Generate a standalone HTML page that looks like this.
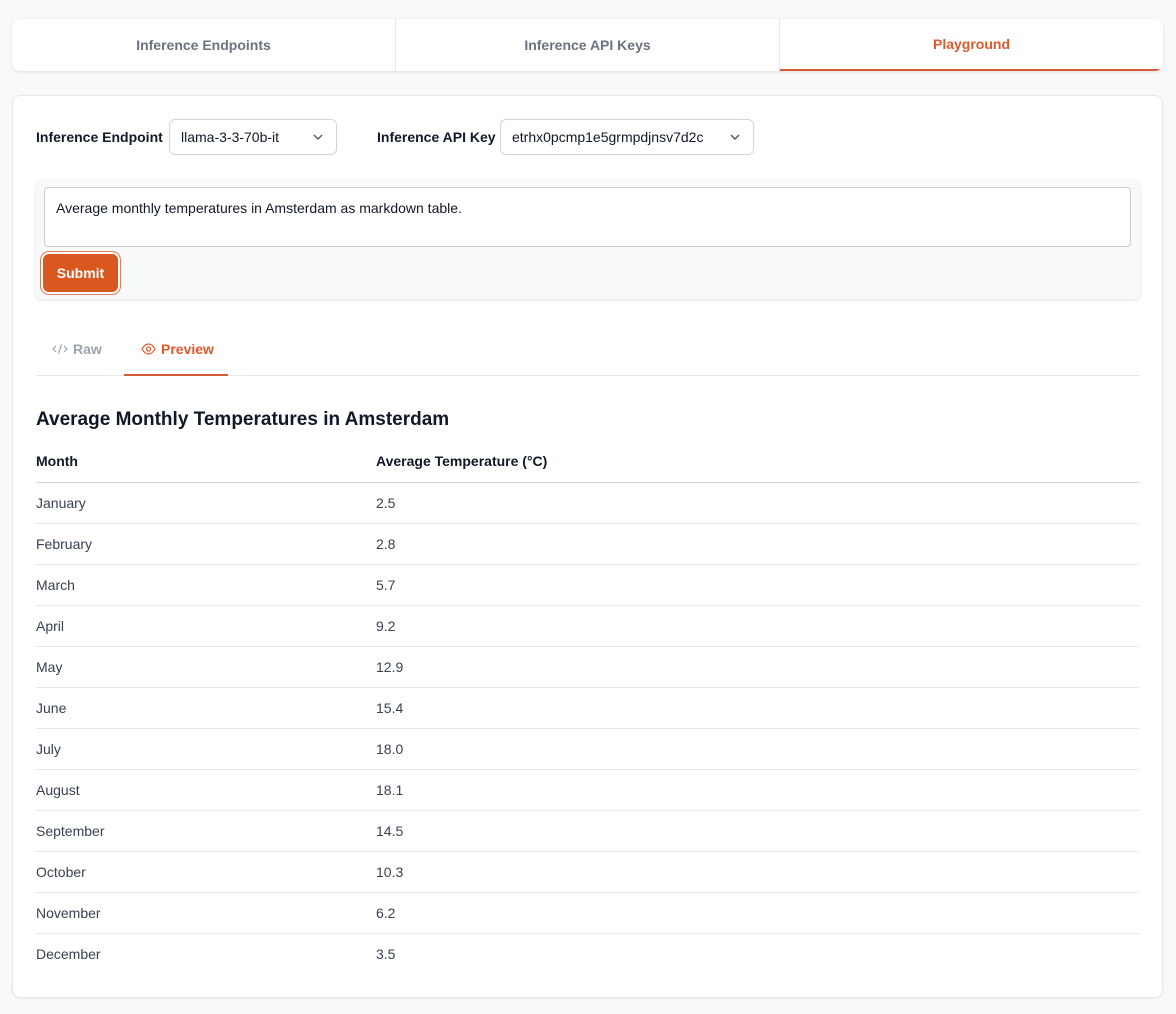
<!DOCTYPE html>
<html><head><meta charset="utf-8"><style>
*{box-sizing:border-box;margin:0;padding:0}
body{width:1176px;height:1014px;background:#f8f9fa;font-family:"Liberation Sans",Arial,sans-serif;position:relative;overflow:hidden;color:#111827}
.tabs{position:absolute;left:12px;top:19px;width:1151px;height:52px;background:#fff;border-radius:8px;box-shadow:0 1px 3px rgba(0,0,0,.1);display:flex;overflow:hidden}
.tab{flex:1;display:flex;align-items:center;justify-content:center;font-size:14px;font-weight:bold;color:#6b7280;border-right:1px solid #e5e7eb}
.tab:last-child{border-right:none;color:#e0572a;border-bottom:2px solid #d9583a}
.card{position:absolute;left:12px;top:95px;width:1151px;height:903px;background:#fff;border:1px solid #e5e7eb;border-radius:8px;box-shadow:0 1px 2px rgba(0,0,0,.06)}
.lbl{position:absolute;font-size:14px;font-weight:bold;color:#111827;top:33px}
.sel{position:absolute;top:23px;height:36px;border:1px solid #d1d5db;border-radius:6px;font-size:14px;color:#111827;padding:9px 0 0 11px}
.sel svg{position:absolute;right:12px;top:13px}
.prompt{position:absolute;left:23px;top:84px;width:1104px;height:119px;background:#f8f9fa;border-radius:6px;box-shadow:0 1px 4px rgba(0,0,0,.12)}
.ta{position:absolute;left:8px;top:7px;width:1087px;height:60px;background:#fff;border:1px solid #c9ccd1;border-radius:4px;font-size:14px;padding:12px 11px;color:#111827}
.btn{position:absolute;left:7px;top:74px;width:75px;height:38px;background:#d9581f;border-radius:6px;color:#fff;font-weight:bold;font-size:14px;display:flex;align-items:center;justify-content:center;box-shadow:0 0 0 2px #fff,0 0 0 3px #e07a5a}
.vt{position:absolute;top:245px;font-size:14px;font-weight:bold;display:flex;align-items:center;gap:5px}
h3{position:absolute;left:23px;top:313px;font-size:19px;font-weight:bold;color:#111827}
table{position:absolute;left:23px;top:345px;width:1103px;border-collapse:collapse;font-size:14px}
th{text-align:left;font-weight:bold;height:41px;border-bottom:1px solid #d1d5db;color:#111827}
td{height:41px;border-bottom:1px solid #e5e7eb;color:#374151}
tr:last-child td{border-bottom:none}
th:first-child,td:first-child{width:340px}
</style></head><body>
<div class="tabs"><div class="tab">Inference Endpoints</div><div class="tab">Inference API Keys</div><div class="tab">Playground</div></div>
<div class="card">
<div class="lbl" style="left:23px">Inference Endpoint</div>
<div class="sel" style="left:156px;width:168px">llama-3-3-70b-it<svg width="12" height="8" viewBox="0 0 12 8"><path d="M2 2l4 4 4-4" fill="none" stroke="#4b5563" stroke-width="1.4"/></svg></div>
<div class="lbl" style="left:364px">Inference API Key</div>
<div class="sel" style="left:487px;width:254px">etrhx0pcmp1e5grmpdjnsv7d2c<svg width="12" height="8" viewBox="0 0 12 8"><path d="M2 2l4 4 4-4" fill="none" stroke="#4b5563" stroke-width="1.4"/></svg></div>
<div class="prompt"><div class="ta">Average monthly temperatures in Amsterdam as markdown table.</div><div class="btn">Submit</div></div>
<div style="position:absolute;left:23px;top:279px;width:1104px;height:1px;background:#e5e7eb"></div>
<div style="position:absolute;left:111px;top:278px;width:104px;height:2px;background:#d9583a"></div>
<div class="vt" style="left:39px;color:#9ca3af"><svg width="16" height="12" viewBox="0 0 16 12"><path d="M4 3L1 6l3 3M12 3l3 3-3 3M9.5 1.5l-3 9" fill="none" stroke="#9ca3af" stroke-width="1.2"/></svg>Raw</div>
<div class="vt" style="left:128px;color:#e0572a"><svg width="15" height="12" viewBox="0 0 15 12"><path d="M1 6c2-3.5 4-5 6.5-5S12 2.5 14 6c-2 3.5-4 5-6.5 5S3 9.5 1 6z" fill="none" stroke="#e0572a" stroke-width="1.2"/><circle cx="7.5" cy="6" r="2" fill="none" stroke="#e0572a" stroke-width="1.2"/></svg>Preview</div>
<h3>Average Monthly Temperatures in Amsterdam</h3>
<table>
<tr><th>Month</th><th>Average Temperature (°C)</th></tr>
<tr><td>January</td><td>2.5</td></tr>
<tr><td>February</td><td>2.8</td></tr>
<tr><td>March</td><td>5.7</td></tr>
<tr><td>April</td><td>9.2</td></tr>
<tr><td>May</td><td>12.9</td></tr>
<tr><td>June</td><td>15.4</td></tr>
<tr><td>July</td><td>18.0</td></tr>
<tr><td>August</td><td>18.1</td></tr>
<tr><td>September</td><td>14.5</td></tr>
<tr><td>October</td><td>10.3</td></tr>
<tr><td>November</td><td>6.2</td></tr>
<tr><td>December</td><td>3.5</td></tr>
</table>
</div>
</body></html>
